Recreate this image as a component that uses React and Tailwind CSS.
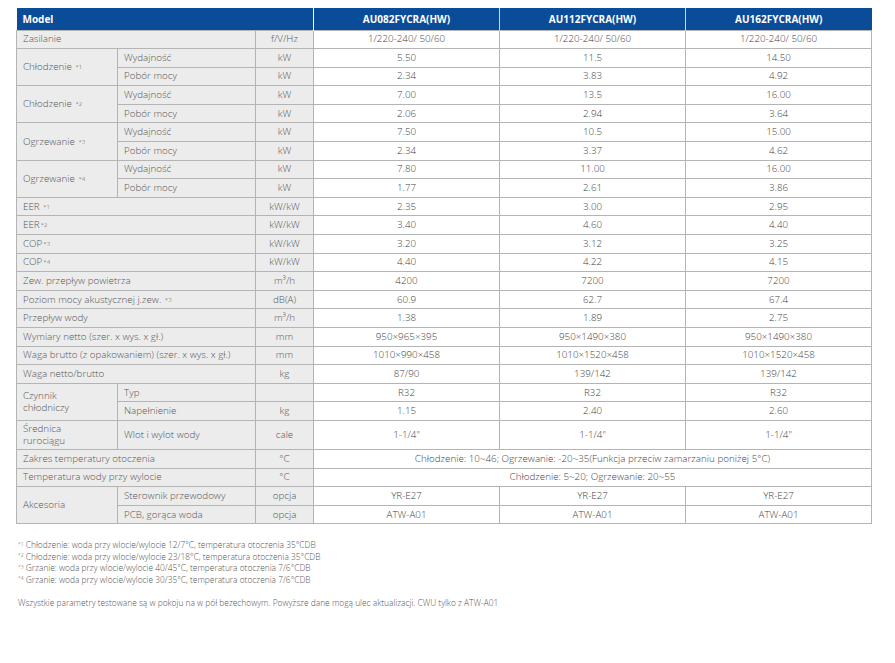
const models = ['AU082FYCRA(HW)', 'AU112FYCRA(HW)', 'AU162FYCRA(HW)'];

const Sup = ({ n }) => (
  <sup className="text-[6px] relative -top-[1px] ml-[1px]">*{n}</sup>
);

const label = 'bg-[#ececec] border border-[#b4b4b4] text-[#555] px-[6px] text-left align-middle';
const unit = 'bg-[#ececec] border border-[#b4b4b4] text-[#555] text-center align-middle';
const val = 'bg-white border border-[#b4b4b4] text-[#444] text-center align-middle';

// proste wiersze: etykieta na dwie kolumny
const Simple = ({ name, u, vals, h = 'h-[18.6px]' }) => (
  <tr className={h}>
    <td colSpan={2} className={label}>{name}</td>
    <td className={unit}>{u}</td>
    {vals.length === 1 ? (
      <td colSpan={3} className={val}>{vals[0]}</td>
    ) : (
      vals.map((v, i) => <td key={i} className={val}>{v}</td>)
    )}
  </tr>
);

const Pair = ({ name, rows }) => (
  <>
    {rows.map((r, i) => (
      <tr key={i} className={r.h || 'h-[18.6px]'}>
        {i === 0 && (
          <td rowSpan={rows.length} className={label}>{name}</td>
        )}
        <td className={label}>{r.sub}</td>
        <td className={unit}>{r.u}</td>
        {r.vals.map((v, j) => <td key={j} className={val}>{v}</td>)}
      </tr>
    ))}
  </>
);

const perf = (a, b) => [
  { sub: 'Wydajność', u: 'kW', vals: a },
  { sub: 'Pobór mocy', u: 'kW', vals: b },
];

const notes = [
  ['1', 'Chłodzenie: woda przy wlocie/wylocie 12/7°C, temperatura otoczenia 35°CDB'],
  ['2', 'Chłodzenie: woda przy wlocie/wylocie 23/18°C, temperatura otoczenia 35°CDB'],
  ['3', 'Grzanie: woda przy wlocie/wylocie 40/45°C, temperatura otoczenia 7/6°CDB'],
  ['4', 'Grzanie: woda przy wlocie/wylocie 30/35°C, temperatura otoczenia 7/6°CDB'],
];

export default function App() {
  return (
    <div className="w-[895px] h-[663px] bg-white pt-[8px] pl-[16px] font-['Open_Sans',sans-serif] text-[9.8px] font-light">
      <table className="border-collapse table-fixed w-[855px]">
        <colgroup>
          <col className="w-[101px]" />
          <col className="w-[138px]" />
          <col className="w-[58px]" />
          <col className="w-[186px]" />
          <col className="w-[186px]" />
          <col className="w-[186px]" />
        </colgroup>
        <tbody className="leading-[12px]">
          <tr className="h-[22px] bg-[#0b4c99] text-white font-bold text-[10px]">
            <td colSpan={3} className="px-[6px] border-r border-white text-left">Model</td>
            {models.map((m, i) => (
              <td key={m} className={`text-center ${i < 2 ? 'border-r border-[#c8d8ee]' : ''}`}>{m}</td>
            ))}
          </tr>
          <Simple name="Zasilanie" u="f/V/Hz" vals={['1/220-240/ 50/60', '1/220-240/ 50/60', '1/220-240/ 50/60']} />
          <Pair name={<>Chłodzenie <Sup n="1" /></>} rows={perf(['5.50', '11.5', '14.50'], ['2.34', '3.83', '4.92'])} />
          <Pair name={<>Chłodzenie <Sup n="2" /></>} rows={perf(['7.00', '13.5', '16.00'], ['2.06', '2.94', '3.64'])} />
          <Pair name={<>Ogrzewanie <Sup n="3" /></>} rows={perf(['7.50', '10.5', '15.00'], ['2.34', '3.37', '4.62'])} />
          <Pair name={<>Ogrzewanie <Sup n="4" /></>} rows={perf(['7.80', '11.00', '16.00'], ['1.77', '2.61', '3.86'])} />
          <Simple name={<>EER <Sup n="1" /></>} u="kW/kW" vals={['2.35', '3.00', '2.95']} />
          <Simple name={<>EER<Sup n="2" /></>} u="kW/kW" vals={['3.40', '4.60', '4.40']} />
          <Simple name={<>COP<Sup n="3" /></>} u="kW/kW" vals={['3.20', '3.12', '3.25']} />
          <Simple name={<>COP<Sup n="4" /></>} u="kW/kW" vals={['4.40', '4.22', '4.15']} />
          <Simple name="Zew. przepływ powietrza" u="m³/h" vals={['4200', '7200', '7200']} />
          <Simple name={<>Poziom mocy akustycznej j.zew. <Sup n="3" /></>} u="dB(A)" vals={['60.9', '62.7', '67.4']} />
          <Simple name="Przepływ wody" u="m³/h" vals={['1.38', '1.89', '2.75']} />
          <Simple name="Wymiary netto (szer. x wys. x gł.)" u="mm" vals={['950×965×395', '950×1490×380', '950×1490×380']} />
          <Simple name="Waga brutto (z opakowaniem) (szer. x wys. x gł.)" u="mm" vals={['1010×990×458', '1010×1520×458', '1010×1520×458']} />
          <Simple name="Waga netto/brutto" u="kg" vals={['87/90', '139/142', '139/142']} />
          <Pair
            name={<>Czynnik<br />chłodniczy</>}
            rows={[
              { sub: 'Typ', u: '', vals: ['R32', 'R32', 'R32'] },
              { sub: 'Napełnienie', u: 'kg', vals: ['1.15', '2.40', '2.60'] },
            ]}
          />
          <Pair
            name={<>Średnica<br />rurociągu</>}
            rows={[{ sub: 'Wlot i wylot wody', u: 'cale', vals: ['1-1/4"', '1-1/4"', '1-1/4"'], h: 'h-[29px]' }]}
          />
          <Simple name="Zakres temperatury otoczenia" u="°C" vals={['Chłodzenie: 10~46; Ogrzewanie:  -20~35(Funkcja przeciw zamarzaniu poniżej 5°C)']} />
          <Simple name="Temperatura wody przy wylocie" u="°C" vals={['Chłodzenie: 5~20; Ogrzewanie: 20~55']} />
          <Pair
            name="Akcesoria"
            rows={[
              { sub: 'Sterownik przewodowy', u: 'opcja', vals: ['YR-E27', 'YR-E27', 'YR-E27'] },
              { sub: 'PCB, gorąca woda', u: 'opcja', vals: ['ATW-A01', 'ATW-A01', 'ATW-A01'] },
            ]}
          />
        </tbody>
      </table>

      <div className="mt-[15px] pl-[2px] text-[8.4px] leading-[11.5px] text-[#555]">
        {notes.map(([n, t]) => (
          <p key={n}>
            <sup className="text-[5px]">*{n}</sup> {t}
          </p>
        ))}
        <p className="mt-[12px]">
          Wszystkie parametry testowane są w pokoju na w pół bezechowym. Powyższe dane mogą ulec aktualizacji. CWU tylko z ATW-A01
        </p>
      </div>
    </div>
  );
}
